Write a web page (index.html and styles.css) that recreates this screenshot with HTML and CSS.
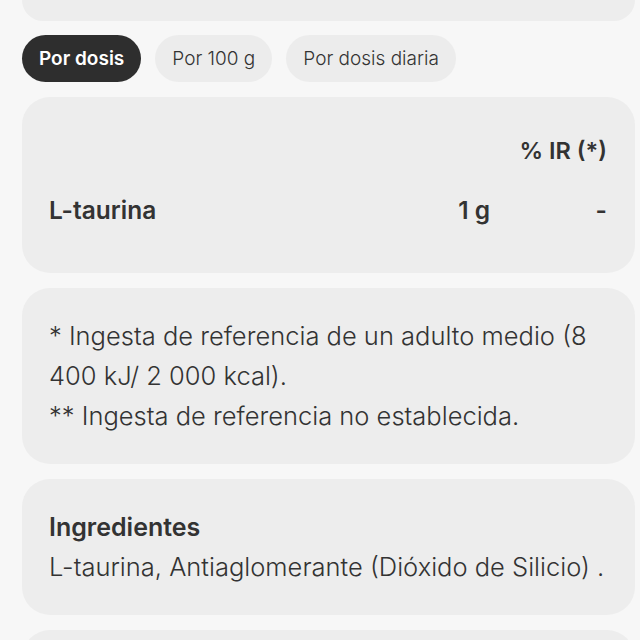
FILE: index.html
```html
<!DOCTYPE html>
<html>
<head>
    <title>L-taurina</title>
    <link rel="stylesheet" href="styles.css">
</head>
<body>
    <div class="page">
        <div class="card card-cut"></div>

        <div class="tabs">
            <div class="tab active">Por dosis</div>
            <div class="tab">Por 100 g</div>
            <div class="tab">Por dosis diaria</div>
        </div>

        <div class="card">
            <div class="nutri-table">
                <div class="nutri-row nutri-head">
                    <div class="nutri-name"></div>
                    <div class="nutri-amount"></div>
                    <div class="nutri-ir">% IR (*)</div>
                </div>
                <div class="nutri-row">
                    <div class="nutri-name">L-taurina</div>
                    <div class="nutri-amount">1 g</div>
                    <div class="nutri-ir">-</div>
                </div>
            </div>
        </div>

        <div class="card">
            <p class="note">* Ingesta de referencia de un adulto medio (8 400 kJ/ 2 000 kcal).</p>
            <p class="note">** Ingesta de referencia no establecida.</p>
        </div>

        <div class="card">
            <h3 class="card-title">Ingredientes</h3>
            <p class="note">L-taurina, Antiaglomerante (Dióxido de Silicio) .</p>
        </div>

        <div class="card card-next"></div>
    </div>
</body>
</html>
```

FILE: styles.css
```css
body {
    margin: 0;
    background-color: #f7f7f7;
    font-family: Inter, "Open Sans", sans-serif;
    color: #333;
    overflow: hidden;
}
.page {
    padding: 0 5px 0 22px;
    display: flex;
    flex-direction: column;
    gap: 15px;
}
.card {
    background: #ededed;
    border-radius: 28px;
    padding: 28px 28px 28px 27px;
}
.card-cut {
    height: 21px;
    padding: 0;
    border-radius: 0 0 28px 28px;
    margin-bottom: -1px;
}
.card-next {
    height: 60px;
}
.tabs {
    display: flex;
    gap: 14px;
}
.tab {
    height: 47px;
    display: flex;
    align-items: center;
    padding: 0 17px;
    border-radius: 24px;
    background: #ececec;
    font-size: 19px;
    font-weight: 300;
    color: #333;
}
.tab.active {
    background: #2e2e2e;
    color: white;
    font-weight: 600;
}
.nutri-row {
    display: flex;
    align-items: center;
    height: 70px;
    font-size: 24.5px;
    font-weight: 600;
}
.nutri-head {
    height: 50px;
    font-size: 23.5px;
}
.nutri-name {
    flex: 1;
}
.nutri-amount {
    width: 120px;
    text-align: right;
}
.nutri-ir {
    width: 117px;
    text-align: right;
}
.note {
    margin: 0;
    font-size: 25.5px;
    font-weight: 300;
    line-height: 40px;
}
.card-title {
    margin: 0;
    font-size: 25px;
    font-weight: 600;
    line-height: 40px;
}
```
